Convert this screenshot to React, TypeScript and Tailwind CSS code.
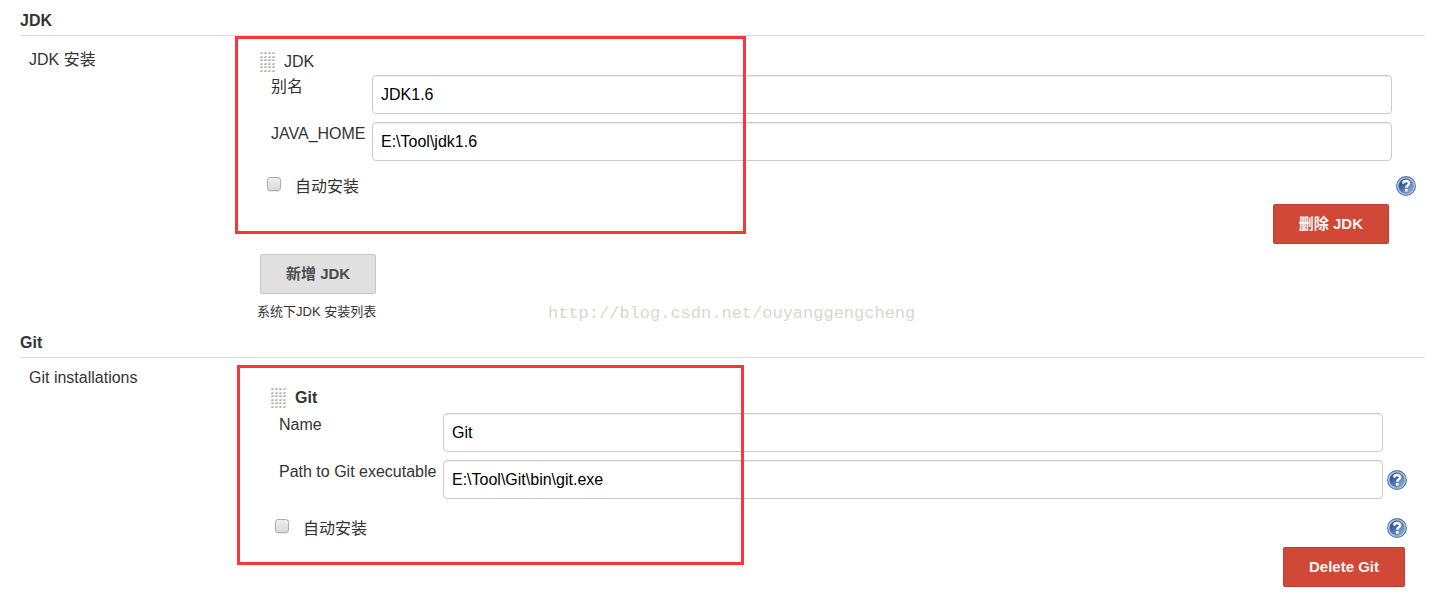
import { useId, type ReactNode } from "react";

const gripRows = [0, 4, 7, 11, 14, 18];
const gripCols = [0, 4, 8, 12];

function DragHandle() {
  return (
    <svg width="15" height="20" viewBox="0 0 15 20" className="shrink-0 cursor-move" aria-hidden="true" shapeRendering="crispEdges">
      {gripRows.map((y) =>
        gripCols.map((x) => (
          <g key={`${x}-${y}`}>
            <rect x={x} y={y} width="3" height="2" fill="#dcdcda" />
            <rect x={x + 1} y={y} width="2" height="1" fill="#cdcdca" />
            <rect x={x} y={y + 1} width="2" height="1" fill="#c4c4c0" />
            <rect x={x + 1} y={y + 1} width="1" height="1" fill="#aeaea9" />
          </g>
        ))
      )}
    </svg>
  );
}

function HelpButton() {
  const id = useId();
  return (
    <button type="button" aria-label="Help" className="h-5 w-5 shrink-0">
      <svg width="20" height="20" viewBox="0 0 20 20" aria-hidden="true">
        <defs>
          <linearGradient id={id} x1="0" y1="0" x2="1" y2="1">
            <stop offset="0.25" stopColor="#2a5596" />
            <stop offset="1" stopColor="#9dbbe2" />
          </linearGradient>
        </defs>
        <circle cx="10" cy="10" r="9.4" fill="#bdd0ea" stroke="#4f73aa" strokeWidth="1.1" />
        <circle cx="10" cy="10" r="7.4" fill={`url(#${id})`} stroke="#5f82b8" strokeWidth="0.5" />
        <path d="M6.9 7.5C7.2 5.8 8.3 5 10 5c1.9 0 3.1 0.9 3.1 2.4 0 2-2.8 2.1-2.8 4.4" fill="none" stroke="#fff" strokeWidth="2.4" />
        <rect x="9" y="13" width="2.6" height="2.5" fill="#fff" />
      </svg>
    </button>
  );
}

function Section({ title, children }: { title: string; children: ReactNode }) {
  return (
    <section>
      <h2 className="flex h-8 items-center border-b border-[#ddd] pt-0.5 text-base font-bold">{title}</h2>
      {children}
    </section>
  );
}

type FieldProps = { label: string; value: string; labelClass: string; help?: boolean };

function Field({ label, value, labelClass, help }: FieldProps) {
  const id = useId();
  return (
    <div className="flex items-start">
      <label htmlFor={id} className={`shrink-0 whitespace-nowrap leading-6 ${labelClass}`}>
        {label}
      </label>
      <input
        id={id}
        type="text"
        defaultValue={value}
        className="h-[39px] min-w-0 flex-1 rounded border border-[#ccc] bg-white px-2 text-base text-black shadow-[inset_0_1px_1px_rgba(0,0,0,0.075)] outline-none"
      />
      <div className="flex h-10 w-6 shrink-0 items-center justify-end">{help && <HelpButton />}</div>
    </div>
  );
}

function AutoInstall() {
  return (
    <div className="flex h-6 items-center justify-between">
      <label className="flex items-center gap-3.5 pt-0.5">
        <input
          type="checkbox"
          className="mb-1.5 h-3.5 w-3.5 appearance-none rounded-[3px] border border-[#adadad] bg-linear-to-b from-[#efefef] to-[#d9d9d9] shadow-[0_1px_1px_rgba(0,0,0,0.1)]"
        />
        自动安装
      </label>
      <HelpButton />
    </div>
  );
}

function DeleteButton({ children }: { children: ReactNode }) {
  return (
    <button type="button" className="rounded-xs border border-[#b93f30] bg-[#d14836] px-[25px] py-2 text-[15px] leading-[22px] font-bold text-[#f5f5f5]">
      {children}
    </button>
  );
}

export default function App() {
  return (
    <main className="bg-white pt-1 pr-[11px] pb-5 pl-5 font-['Liberation_Sans','Noto_Sans_CJK_SC',sans-serif] text-base leading-6 text-[#333]">
      <Section title="JDK">
        <div className="relative flex pb-1">
          <div className="w-[237px] shrink-0 pt-3 pl-[9px]">JDK 安装</div>
          <div className="min-w-0 flex-1 pt-3.5">
            <div className="pr-[9px]">
              <div className="flex items-center gap-[9px] pl-[3px]">
                <DragHandle />
                JDK
              </div>
              <div className="mt-px flex flex-col gap-[7px] pl-3.5">
                <Field label="别名" value="JDK1.6" labelClass="w-[101px]" />
                <Field label="JAVA_HOME" value={"E:\\Tool\\jdk1.6"} labelClass="w-[101px]" />
              </div>
              <div className="mt-3 pl-2.5">
                <AutoInstall />
              </div>
              <div className="mt-1.5 flex justify-end pr-[27px]">
                <DeleteButton>删除 JDK</DeleteButton>
              </div>
            </div>
            <button type="button" className="mt-2.5 ml-[3px] block rounded-xs border border-[#c6c6c6] bg-[#e0e0e0] px-[25px] py-2 text-[15px] leading-[22px] font-bold text-[#4d4d4d]">
              新增 JDK
            </button>
            <p className="mt-2 text-[13px] leading-5">系统下JDK 安装列表</p>
          </div>
          {/* red highlight around the values to fill in */}
          <div className="pointer-events-none absolute top-0 left-[215px] h-[198px] w-[511px] border-3 border-[#fc3636]" />
          <span className="pointer-events-none absolute bottom-0 left-[528px] font-['Liberation_Mono',monospace] text-[17px] text-[#d8d8d0]">
            http://blog.csdn.net/ouyanggengcheng
          </span>
        </div>
      </Section>

      <Section title="Git">
        <div className="relative flex">
          <div className="w-[251px] shrink-0 pt-2 pl-[9px]">Git installations</div>
          <div className="min-w-0 flex-1 pt-7 pr-[18px]">
            <div className="flex items-center gap-[9px] font-bold">
              <DragHandle />
              Git
            </div>
            <div className="mt-[3px] flex flex-col gap-[7px] pl-2">
              <Field label="Name" value="Git" labelClass="w-[164px]" />
              <Field label="Path to Git executable" value={"E:\\Tool\\Git\\bin\\git.exe"} labelClass="w-[164px]" help />
            </div>
            <div className="mt-4 pl-1">
              <AutoInstall />
            </div>
            <div className="mt-[7px] flex justify-end pr-0.5">
              <DeleteButton>Delete Git</DeleteButton>
            </div>
          </div>
          <div className="pointer-events-none absolute top-[7px] left-[217px] h-[200px] w-[507px] border-3 border-[#fc3636]" />
        </div>
      </Section>
    </main>
  );
}
